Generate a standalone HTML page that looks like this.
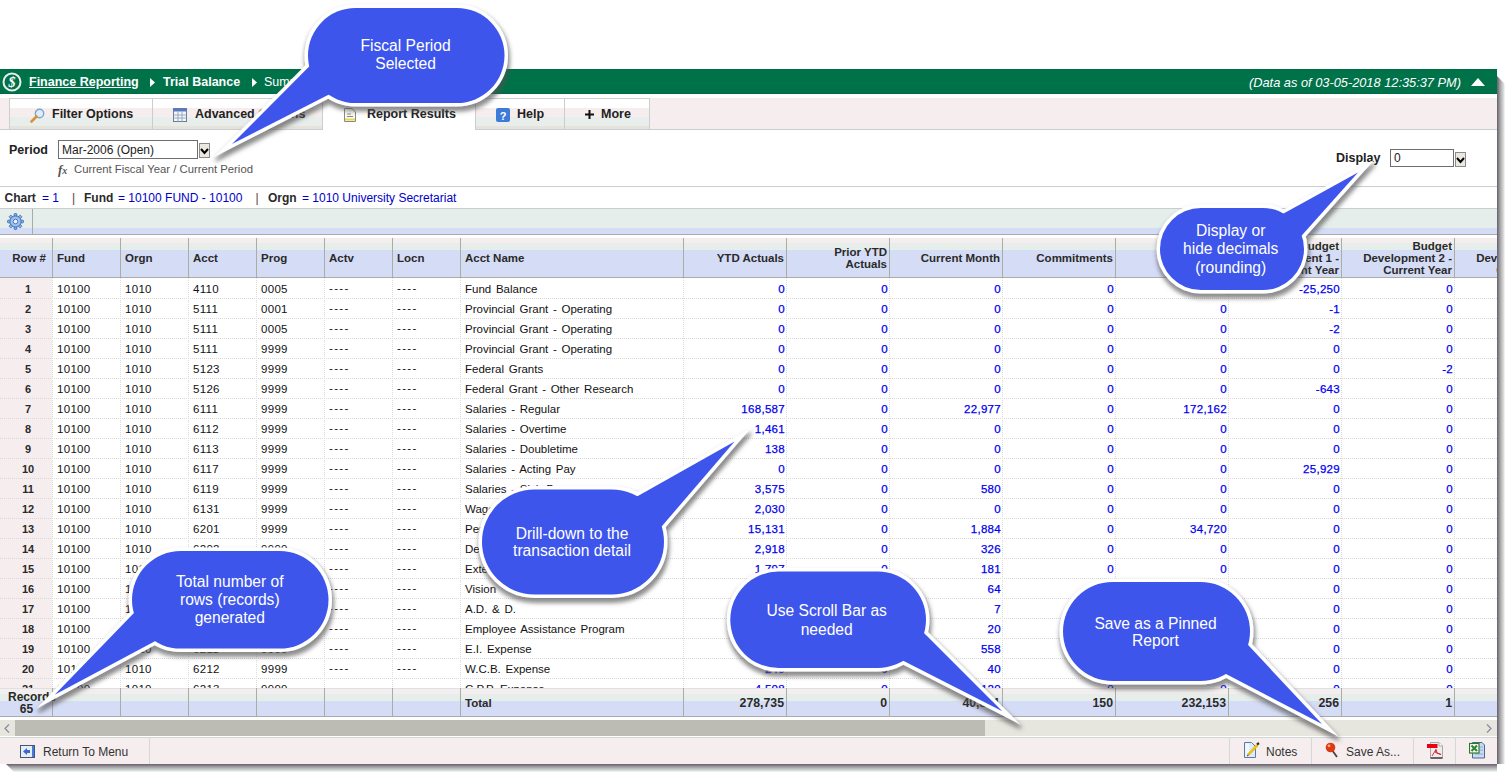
<!DOCTYPE html>
<html><head><meta charset="utf-8"><title>Trial Balance</title>
<style>
*{box-sizing:border-box;}
html,body{margin:0;padding:0;}
body{width:1512px;height:779px;overflow:hidden;background:#fff;position:relative;font-family:"Liberation Sans", sans-serif;color:#222;}
.abs{position:absolute;}
#win{position:absolute;left:0;top:69px;width:1497px;height:695px;background:#fff;overflow:hidden;}
#green{position:absolute;left:0;top:0;width:1497px;height:25px;background:#00724A;border-top:1px solid #006A44;border-bottom:1px solid #006A44;}
.bc{position:absolute;top:5px;font-size:12.5px;font-weight:bold;color:#fff;white-space:nowrap;}
#tabbar{position:absolute;left:0;top:29px;width:1497px;height:32px;background:#F6EEEE;border-bottom:1px solid #C9CFCF;}
.tab{position:absolute;top:0;height:31px;border:1px solid #C9CFCF;border-bottom:none;background:linear-gradient(#fff 0,#fff 9px,#F6EEEE 9px,#F6EEEE 18px,#E8EEEC 18px,#E8EEEC 27px,#E6E4DA 27px);font-size:12.5px;font-weight:bold;color:#222;white-space:nowrap;}
.tab.act{background:#fff;height:32px;}
.tab span{position:absolute;top:8px;}
.hl{position:absolute;left:0;width:1497px;height:1px;background:#C9CFCF;}
.cell{position:absolute;white-space:nowrap;font-size:12px;}
.dt{font-size:11.5px;color:#111;word-spacing:1.5px;}
.num{letter-spacing:0.3px;-webkit-text-stroke:0.25px #0000F0;}
.num{color:#0000F0;text-align:right;}
.hdr{position:absolute;font-size:11.5px;font-weight:bold;color:#2a2a2a;line-height:12px;white-space:nowrap;}
.callout{position:absolute;left:0;top:0;}
.ct{position:absolute;color:#fff;font-size:16px;line-height:18px;text-align:center;white-space:nowrap;}
</style></head><body>
<div style="position:absolute;left:1497px;top:76px;width:8px;height:696px;background:linear-gradient(90deg,#6E6C70 0px,#6E6C70 1px,#857D8D 1px,#857D8D 2px,#9498A0 2px,#9498A0 3px,#B2A6A6 3px,#B2A6A6 4px,#BABEB6 4px,#BABEB6 5px,#C6CCCC 5px,#C6CCCC 6px,#D8DCDC 6px,#D8DCDC 7px,#ECF2F2 7px,#ECF2F2 8px);clip-path:polygon(0 0,100% 8px,100% 688px,0 688px);"></div>
<div style="position:absolute;left:6px;top:764px;width:1491px;height:8px;background:linear-gradient(180deg,#6E6C70 0px,#6E6C70 1px,#857D8D 1px,#857D8D 2px,#9498A0 2px,#9498A0 3px,#B2A6A6 3px,#B2A6A6 4px,#BABEB6 4px,#BABEB6 5px,#C6CCCC 5px,#C6CCCC 6px,#D8DCDC 6px,#D8DCDC 7px,#ECF2F2 7px,#ECF2F2 8px);clip-path:polygon(0 0,100% 0,100% 100%,8px 100%);"></div>
<div id="win">

<div id="green">
<svg class="abs" style="left:2px;top:2px" width="20" height="20" viewBox="0 0 20 20"><circle cx="10" cy="10" r="8.5" fill="none" stroke="#E8F0EC" stroke-width="2"/><text x="10" y="15" font-family="Liberation Serif" font-size="14" font-weight="bold" font-style="italic" fill="#fff" text-anchor="middle">$</text></svg>
<div class="bc" style="left:29px;text-decoration:underline;">Finance Reporting</div>
<svg class="abs" style="left:150px;top:7.5px" width="5" height="9"><path d="M0 0 L5 4.5 L0 9Z" fill="#fff"/></svg>
<div class="bc" style="left:163px;">Trial Balance</div>
<svg class="abs" style="left:252px;top:7.5px" width="5" height="9"><path d="M0 0 L5 4.5 L0 9Z" fill="#fff"/></svg>
<div class="bc" style="left:264px;font-weight:normal;">Summary</div>
<div class="bc" style="left:1249px;font-weight:normal;font-style:italic;font-size:12.8px;">(Data as of 03-05-2018 12:35:37 PM)</div>
<svg class="abs" style="left:1471px;top:8px" width="14" height="8"><path d="M0 8 L7 0 L14 8Z" fill="#fff"/></svg>
</div>
<div id="tabbar">
<div class="tab" style="left:9px;width:144px;"><svg class="abs" style="left:20px;top:9px" width="15" height="15" viewBox="0 0 15 15"><circle cx="9.5" cy="5.5" r="4.2" fill="#DDEEFA" stroke="#7EA6C8" stroke-width="1.4"/><path d="M6.5 8.5 L1.5 13.5" stroke="#D8923A" stroke-width="2.6" stroke-linecap="round"/></svg><span style="left:42px">Filter Options</span></div>
<div class="tab" style="left:152px;width:171px;"><svg class="abs" style="left:20px;top:9px" width="14" height="14" viewBox="0 0 14 14"><rect x="0.5" y="0.5" width="13" height="13" fill="#F4F6FA" stroke="#6A7C9C"/><rect x="0.5" y="0.5" width="13" height="3" fill="#5A7AC0"/><path d="M0.5 7H13.5M0.5 10H13.5M5 3.5V13.5M9 3.5V13.5" stroke="#9AA8C0" stroke-width="1"/></svg><span style="left:42px">Advanced Options</span></div>
<div class="tab act" style="left:322px;width:154px;"><svg class="abs" style="left:21px;top:9px" width="12" height="14" viewBox="0 0 12 14"><path d="M0.5 0.5H8L11.5 4V13.5H0.5Z" fill="#FAFAF4" stroke="#8A8A80"/><path d="M3 6H7M3 8.5H9" stroke="#888" stroke-width="1"/><path d="M1 11.5H11" stroke="#E8D84A" stroke-width="2"/></svg><span style="left:44px">Report Results</span></div>
<div class="tab" style="left:475px;width:91px;"><svg class="abs" style="left:20px;top:9px" width="14" height="14" viewBox="0 0 14 14"><rect x="0" y="0" width="14" height="14" rx="2" fill="#3E7AD8"/><text x="7" y="11.5" font-family="Liberation Sans" font-size="11" font-weight="bold" fill="#fff" text-anchor="middle">?</text></svg><span style="left:41px">Help</span></div>
<div class="tab" style="left:564px;width:86px;"><svg class="abs" style="left:20px;top:11px" width="9" height="9" viewBox="0 0 9 9"><path d="M4.5 0V9M0 4.5H9" stroke="#111" stroke-width="2"/></svg><span style="left:36px">More</span></div>
</div>
<div class="cell" style="left:9px;top:74px;font-weight:bold;font-size:12.5px;">Period</div>
<div class="abs" style="left:58px;top:71px;width:140px;height:19px;border:1px solid #6E6E6E;background:#fff;"><span class="cell" style="left:3px;top:2px;">Mar-2006 (Open)</span></div>
<div class="abs" style="left:199px;top:74px;width:11px;height:15px;border:1px solid #8A8A8A;background:#EAE8E0;"><svg class="abs" style="left:0px;top:3px" width="9" height="8"><path d="M1 2 L4.5 6 L8 2" fill="none" stroke="#000" stroke-width="2"/></svg></div>
<div class="cell" style="left:58px;top:93px;font-size:13px;font-style:italic;font-family:'Liberation Serif';font-weight:bold;color:#555;">f<span style="font-size:10px">x</span></div>
<div class="cell" style="left:74px;top:94px;font-size:11.3px;color:#555;">Current Fiscal Year / Current Period</div>
<div class="cell" style="left:1336px;top:82px;font-weight:bold;font-size:12.5px;">Display</div>
<div class="abs" style="left:1390px;top:80px;width:64px;height:18px;border:1px solid #6E6E6E;background:#fff;"><span class="cell" style="left:3px;top:1px;">0</span></div>
<div class="abs" style="left:1455px;top:83px;width:11px;height:15px;border:1px solid #8A8A8A;background:#EAE8E0;"><svg class="abs" style="left:0px;top:3px" width="9" height="8"><path d="M1 2 L4.5 6 L8 2" fill="none" stroke="#000" stroke-width="2"/></svg></div>
<div class="hl" style="top:117px;"></div>
<div class="cell" style="left:4.5px;top:122px;font-size:12px;font-weight:bold;color:#2a2a2a;">Chart</div>
<div class="cell" style="left:42px;top:122px;font-size:12px;color:#0000C8;">= 1</div>
<div class="cell" style="left:72px;top:122px;font-size:12px;color:#5a3a3a;">|</div>
<div class="cell" style="left:84px;top:122px;font-size:12px;font-weight:bold;color:#2a2a2a;">Fund</div>
<div class="cell" style="left:118px;top:122px;font-size:12px;color:#0000C8;">= 10100 FUND - 10100</div>
<div class="cell" style="left:255.5px;top:122px;font-size:12px;color:#5a3a3a;">|</div>
<div class="cell" style="left:268px;top:122px;font-size:12px;font-weight:bold;color:#2a2a2a;">Orgn</div>
<div class="cell" style="left:302px;top:122px;font-size:12px;color:#0000C8;">= 1010 University Secretariat</div>
<div class="hl" style="top:139px;"></div>
<div class="abs" style="left:0;top:140px;width:1497px;height:19px;background:#E6EEEC;"></div>
<div class="abs" style="left:0;top:159px;width:1497px;height:6px;background:#D5DCF5;"></div>
<div class="abs" style="left:0;top:165px;width:1497px;height:1px;background:#A8ACA8;"></div>
<div class="abs" style="left:32px;top:140px;width:1px;height:25px;background:#A8ACA8;"></div>
<svg class="abs" style="left:7px;top:144px" width="17" height="17" viewBox="0 0 17 17"><g fill="#8DB4E8" stroke="#3E6EB8" stroke-width="0.9"><rect x="7.2" y="0.6" width="2.6" height="4" rx="0.6" transform="rotate(0 8.5 8.5)"/><rect x="7.2" y="0.6" width="2.6" height="4" rx="0.6" transform="rotate(45 8.5 8.5)"/><rect x="7.2" y="0.6" width="2.6" height="4" rx="0.6" transform="rotate(90 8.5 8.5)"/><rect x="7.2" y="0.6" width="2.6" height="4" rx="0.6" transform="rotate(135 8.5 8.5)"/><rect x="7.2" y="0.6" width="2.6" height="4" rx="0.6" transform="rotate(180 8.5 8.5)"/><rect x="7.2" y="0.6" width="2.6" height="4" rx="0.6" transform="rotate(225 8.5 8.5)"/><rect x="7.2" y="0.6" width="2.6" height="4" rx="0.6" transform="rotate(270 8.5 8.5)"/><rect x="7.2" y="0.6" width="2.6" height="4" rx="0.6" transform="rotate(315 8.5 8.5)"/><circle cx="8.5" cy="8.5" r="5.6"/></g><circle cx="8.5" cy="8.5" r="4.6" fill="#9CC2F0"/><circle cx="8.5" cy="8.5" r="2.3" fill="#EEF4FA" stroke="#3E6EB8" stroke-width="0.9"/></svg>
<div class="abs" style="left:0;top:169px;width:1497px;height:5px;background:#F6EEEE;"></div>
<div class="abs" style="left:0;top:174px;width:1497px;height:7px;background:#E6EEEC;"></div>
<div class="abs" style="left:0;top:181px;width:1497px;height:27px;background:#D5DCF5;"></div>
<div class="abs" style="left:0;top:208px;width:1497px;height:1px;background:#A9ADA6;"></div>
<div class="abs" style="left:52px;top:169px;width:1px;height:39px;background:#A9ADA6;"></div>
<div class="abs" style="left:120px;top:169px;width:1px;height:39px;background:#A9ADA6;"></div>
<div class="abs" style="left:188px;top:169px;width:1px;height:39px;background:#A9ADA6;"></div>
<div class="abs" style="left:256px;top:169px;width:1px;height:39px;background:#A9ADA6;"></div>
<div class="abs" style="left:324px;top:169px;width:1px;height:39px;background:#A9ADA6;"></div>
<div class="abs" style="left:392px;top:169px;width:1px;height:39px;background:#A9ADA6;"></div>
<div class="abs" style="left:460px;top:169px;width:1px;height:39px;background:#A9ADA6;"></div>
<div class="abs" style="left:683px;top:169px;width:1px;height:39px;background:#A9ADA6;"></div>
<div class="abs" style="left:786px;top:169px;width:1px;height:39px;background:#A9ADA6;"></div>
<div class="abs" style="left:889px;top:169px;width:1px;height:39px;background:#A9ADA6;"></div>
<div class="abs" style="left:1002px;top:169px;width:1px;height:39px;background:#A9ADA6;"></div>
<div class="abs" style="left:1115px;top:169px;width:1px;height:39px;background:#A9ADA6;"></div>
<div class="abs" style="left:1228px;top:169px;width:1px;height:39px;background:#A9ADA6;"></div>
<div class="abs" style="left:1341px;top:169px;width:1px;height:39px;background:#A9ADA6;"></div>
<div class="abs" style="left:1454px;top:169px;width:1px;height:39px;background:#A9ADA6;"></div>
<div class="hdr" style="left:0px;width:46px;text-align:right;top:183px;">Row #</div>
<div class="hdr" style="left:57px;top:183px;">Fund</div>
<div class="hdr" style="left:125px;top:183px;">Orgn</div>
<div class="hdr" style="left:193px;top:183px;">Acct</div>
<div class="hdr" style="left:261px;top:183px;">Prog</div>
<div class="hdr" style="left:329px;top:183px;">Actv</div>
<div class="hdr" style="left:397px;top:183px;">Locn</div>
<div class="hdr" style="left:465px;top:183px;">Acct Name</div>
<div class="hdr" style="left:683px;width:101px;text-align:right;top:183px;">YTD Actuals</div>
<div class="hdr" style="left:786px;width:101px;text-align:right;top:177px;">Prior YTD<br>Actuals</div>
<div class="hdr" style="left:889px;width:111px;text-align:right;top:183px;">Current Month</div>
<div class="hdr" style="left:1002px;width:111px;text-align:right;top:183px;">Commitments</div>
<div class="hdr" style="left:1115px;width:111px;text-align:right;top:177px;">Adjusted<br>Budget</div>
<div class="hdr" style="left:1228px;width:111px;text-align:right;top:171px;">Budget<br>Development 1 -<br>Current Year</div>
<div class="hdr" style="left:1341px;width:111px;text-align:right;top:171px;">Budget<br>Development 2 -<br>Current Year</div>
<div class="hdr" style="left:1454px;width:111px;text-align:right;top:171px;">Budget<br>Development 3 -<br>Current Year</div>
<div class="abs" style="left:0;top:209px;width:1497px;height:410px;overflow:hidden;">
<div class="abs" style="left:0;top:0;width:52px;height:420px;background:#F6EEEE;"></div>
<div class="abs" style="left:0;top:20px;width:1497px;height:1px;background-image:linear-gradient(90deg,#D8D8D8 50%,transparent 50%);background-size:2px 1px;"></div>
<div class="cell" style="left:2px;width:52px;text-align:center;top:5px;font-weight:bold;font-size:11px;color:#2a2a2a;">1</div>
<div class="cell dt" style="left:57px;top:5px;letter-spacing:0.3px;">10100</div>
<div class="cell dt" style="left:125px;top:5px;letter-spacing:0.3px;">1010</div>
<div class="cell dt" style="left:193px;top:5px;letter-spacing:0.3px;">4110</div>
<div class="cell dt" style="left:261px;top:5px;letter-spacing:0.3px;">0005</div>
<div class="cell dt" style="left:329px;top:4px;letter-spacing:1.3px;">----</div>
<div class="cell dt" style="left:397px;top:4px;letter-spacing:1.3px;">----</div>
<div class="cell dt" style="left:465px;top:5px;">Fund Balance</div>
<div class="cell dt num" style="left:683px;width:102px;top:5px;color:#0000F0;">0</div>
<div class="cell dt num" style="left:786px;width:102px;top:5px;color:#0000F0;">0</div>
<div class="cell dt num" style="left:889px;width:112px;top:5px;color:#0000F0;">0</div>
<div class="cell dt num" style="left:1002px;width:112px;top:5px;color:#0000F0;">0</div>
<div class="cell dt num" style="left:1115px;width:112px;top:5px;color:#0000F0;">0</div>
<div class="cell dt num" style="left:1228px;width:112px;top:5px;color:#0000F0;">-25,250</div>
<div class="cell dt num" style="left:1341px;width:112px;top:5px;color:#0000F0;">0</div>
<div class="abs" style="left:0;top:40px;width:1497px;height:1px;background-image:linear-gradient(90deg,#D8D8D8 50%,transparent 50%);background-size:2px 1px;"></div>
<div class="cell" style="left:2px;width:52px;text-align:center;top:25px;font-weight:bold;font-size:11px;color:#2a2a2a;">2</div>
<div class="cell dt" style="left:57px;top:25px;letter-spacing:0.3px;">10100</div>
<div class="cell dt" style="left:125px;top:25px;letter-spacing:0.3px;">1010</div>
<div class="cell dt" style="left:193px;top:25px;letter-spacing:0.3px;">5111</div>
<div class="cell dt" style="left:261px;top:25px;letter-spacing:0.3px;">0001</div>
<div class="cell dt" style="left:329px;top:24px;letter-spacing:1.3px;">----</div>
<div class="cell dt" style="left:397px;top:24px;letter-spacing:1.3px;">----</div>
<div class="cell dt" style="left:465px;top:25px;">Provincial Grant - Operating</div>
<div class="cell dt num" style="left:683px;width:102px;top:25px;color:#0000F0;">0</div>
<div class="cell dt num" style="left:786px;width:102px;top:25px;color:#0000F0;">0</div>
<div class="cell dt num" style="left:889px;width:112px;top:25px;color:#0000F0;">0</div>
<div class="cell dt num" style="left:1002px;width:112px;top:25px;color:#0000F0;">0</div>
<div class="cell dt num" style="left:1115px;width:112px;top:25px;color:#0000F0;">0</div>
<div class="cell dt num" style="left:1228px;width:112px;top:25px;color:#0000F0;">-1</div>
<div class="cell dt num" style="left:1341px;width:112px;top:25px;color:#0000F0;">0</div>
<div class="abs" style="left:0;top:60px;width:1497px;height:1px;background-image:linear-gradient(90deg,#D8D8D8 50%,transparent 50%);background-size:2px 1px;"></div>
<div class="cell" style="left:2px;width:52px;text-align:center;top:45px;font-weight:bold;font-size:11px;color:#2a2a2a;">3</div>
<div class="cell dt" style="left:57px;top:45px;letter-spacing:0.3px;">10100</div>
<div class="cell dt" style="left:125px;top:45px;letter-spacing:0.3px;">1010</div>
<div class="cell dt" style="left:193px;top:45px;letter-spacing:0.3px;">5111</div>
<div class="cell dt" style="left:261px;top:45px;letter-spacing:0.3px;">0005</div>
<div class="cell dt" style="left:329px;top:44px;letter-spacing:1.3px;">----</div>
<div class="cell dt" style="left:397px;top:44px;letter-spacing:1.3px;">----</div>
<div class="cell dt" style="left:465px;top:45px;">Provincial Grant - Operating</div>
<div class="cell dt num" style="left:683px;width:102px;top:45px;color:#0000F0;">0</div>
<div class="cell dt num" style="left:786px;width:102px;top:45px;color:#0000F0;">0</div>
<div class="cell dt num" style="left:889px;width:112px;top:45px;color:#0000F0;">0</div>
<div class="cell dt num" style="left:1002px;width:112px;top:45px;color:#0000F0;">0</div>
<div class="cell dt num" style="left:1115px;width:112px;top:45px;color:#0000F0;">0</div>
<div class="cell dt num" style="left:1228px;width:112px;top:45px;color:#0000F0;">-2</div>
<div class="cell dt num" style="left:1341px;width:112px;top:45px;color:#0000F0;">0</div>
<div class="abs" style="left:0;top:80px;width:1497px;height:1px;background-image:linear-gradient(90deg,#D8D8D8 50%,transparent 50%);background-size:2px 1px;"></div>
<div class="cell" style="left:2px;width:52px;text-align:center;top:65px;font-weight:bold;font-size:11px;color:#2a2a2a;">4</div>
<div class="cell dt" style="left:57px;top:65px;letter-spacing:0.3px;">10100</div>
<div class="cell dt" style="left:125px;top:65px;letter-spacing:0.3px;">1010</div>
<div class="cell dt" style="left:193px;top:65px;letter-spacing:0.3px;">5111</div>
<div class="cell dt" style="left:261px;top:65px;letter-spacing:0.3px;">9999</div>
<div class="cell dt" style="left:329px;top:64px;letter-spacing:1.3px;">----</div>
<div class="cell dt" style="left:397px;top:64px;letter-spacing:1.3px;">----</div>
<div class="cell dt" style="left:465px;top:65px;">Provincial Grant - Operating</div>
<div class="cell dt num" style="left:683px;width:102px;top:65px;color:#0000F0;">0</div>
<div class="cell dt num" style="left:786px;width:102px;top:65px;color:#0000F0;">0</div>
<div class="cell dt num" style="left:889px;width:112px;top:65px;color:#0000F0;">0</div>
<div class="cell dt num" style="left:1002px;width:112px;top:65px;color:#0000F0;">0</div>
<div class="cell dt num" style="left:1115px;width:112px;top:65px;color:#0000F0;">0</div>
<div class="cell dt num" style="left:1228px;width:112px;top:65px;color:#0000F0;">0</div>
<div class="cell dt num" style="left:1341px;width:112px;top:65px;color:#0000F0;">0</div>
<div class="abs" style="left:0;top:100px;width:1497px;height:1px;background-image:linear-gradient(90deg,#D8D8D8 50%,transparent 50%);background-size:2px 1px;"></div>
<div class="cell" style="left:2px;width:52px;text-align:center;top:85px;font-weight:bold;font-size:11px;color:#2a2a2a;">5</div>
<div class="cell dt" style="left:57px;top:85px;letter-spacing:0.3px;">10100</div>
<div class="cell dt" style="left:125px;top:85px;letter-spacing:0.3px;">1010</div>
<div class="cell dt" style="left:193px;top:85px;letter-spacing:0.3px;">5123</div>
<div class="cell dt" style="left:261px;top:85px;letter-spacing:0.3px;">9999</div>
<div class="cell dt" style="left:329px;top:84px;letter-spacing:1.3px;">----</div>
<div class="cell dt" style="left:397px;top:84px;letter-spacing:1.3px;">----</div>
<div class="cell dt" style="left:465px;top:85px;">Federal Grants</div>
<div class="cell dt num" style="left:683px;width:102px;top:85px;color:#0000F0;">0</div>
<div class="cell dt num" style="left:786px;width:102px;top:85px;color:#0000F0;">0</div>
<div class="cell dt num" style="left:889px;width:112px;top:85px;color:#0000F0;">0</div>
<div class="cell dt num" style="left:1002px;width:112px;top:85px;color:#0000F0;">0</div>
<div class="cell dt num" style="left:1115px;width:112px;top:85px;color:#0000F0;">0</div>
<div class="cell dt num" style="left:1228px;width:112px;top:85px;color:#0000F0;">0</div>
<div class="cell dt num" style="left:1341px;width:112px;top:85px;color:#0000F0;">-2</div>
<div class="abs" style="left:0;top:120px;width:1497px;height:1px;background-image:linear-gradient(90deg,#D8D8D8 50%,transparent 50%);background-size:2px 1px;"></div>
<div class="cell" style="left:2px;width:52px;text-align:center;top:105px;font-weight:bold;font-size:11px;color:#2a2a2a;">6</div>
<div class="cell dt" style="left:57px;top:105px;letter-spacing:0.3px;">10100</div>
<div class="cell dt" style="left:125px;top:105px;letter-spacing:0.3px;">1010</div>
<div class="cell dt" style="left:193px;top:105px;letter-spacing:0.3px;">5126</div>
<div class="cell dt" style="left:261px;top:105px;letter-spacing:0.3px;">9999</div>
<div class="cell dt" style="left:329px;top:104px;letter-spacing:1.3px;">----</div>
<div class="cell dt" style="left:397px;top:104px;letter-spacing:1.3px;">----</div>
<div class="cell dt" style="left:465px;top:105px;">Federal Grant - Other Research</div>
<div class="cell dt num" style="left:683px;width:102px;top:105px;color:#0000F0;">0</div>
<div class="cell dt num" style="left:786px;width:102px;top:105px;color:#0000F0;">0</div>
<div class="cell dt num" style="left:889px;width:112px;top:105px;color:#0000F0;">0</div>
<div class="cell dt num" style="left:1002px;width:112px;top:105px;color:#0000F0;">0</div>
<div class="cell dt num" style="left:1115px;width:112px;top:105px;color:#0000F0;">0</div>
<div class="cell dt num" style="left:1228px;width:112px;top:105px;color:#0000F0;">-643</div>
<div class="cell dt num" style="left:1341px;width:112px;top:105px;color:#0000F0;">0</div>
<div class="abs" style="left:0;top:140px;width:1497px;height:1px;background-image:linear-gradient(90deg,#D8D8D8 50%,transparent 50%);background-size:2px 1px;"></div>
<div class="cell" style="left:2px;width:52px;text-align:center;top:125px;font-weight:bold;font-size:11px;color:#2a2a2a;">7</div>
<div class="cell dt" style="left:57px;top:125px;letter-spacing:0.3px;">10100</div>
<div class="cell dt" style="left:125px;top:125px;letter-spacing:0.3px;">1010</div>
<div class="cell dt" style="left:193px;top:125px;letter-spacing:0.3px;">6111</div>
<div class="cell dt" style="left:261px;top:125px;letter-spacing:0.3px;">9999</div>
<div class="cell dt" style="left:329px;top:124px;letter-spacing:1.3px;">----</div>
<div class="cell dt" style="left:397px;top:124px;letter-spacing:1.3px;">----</div>
<div class="cell dt" style="left:465px;top:125px;">Salaries - Regular</div>
<div class="cell dt num" style="left:683px;width:102px;top:125px;color:#0000F0;">168,587</div>
<div class="cell dt num" style="left:786px;width:102px;top:125px;color:#0000F0;">0</div>
<div class="cell dt num" style="left:889px;width:112px;top:125px;color:#0000F0;">22,977</div>
<div class="cell dt num" style="left:1002px;width:112px;top:125px;color:#0000F0;">0</div>
<div class="cell dt num" style="left:1115px;width:112px;top:125px;color:#0000F0;">172,162</div>
<div class="cell dt num" style="left:1228px;width:112px;top:125px;color:#0000F0;">0</div>
<div class="cell dt num" style="left:1341px;width:112px;top:125px;color:#0000F0;">0</div>
<div class="abs" style="left:0;top:160px;width:1497px;height:1px;background-image:linear-gradient(90deg,#D8D8D8 50%,transparent 50%);background-size:2px 1px;"></div>
<div class="cell" style="left:2px;width:52px;text-align:center;top:145px;font-weight:bold;font-size:11px;color:#2a2a2a;">8</div>
<div class="cell dt" style="left:57px;top:145px;letter-spacing:0.3px;">10100</div>
<div class="cell dt" style="left:125px;top:145px;letter-spacing:0.3px;">1010</div>
<div class="cell dt" style="left:193px;top:145px;letter-spacing:0.3px;">6112</div>
<div class="cell dt" style="left:261px;top:145px;letter-spacing:0.3px;">9999</div>
<div class="cell dt" style="left:329px;top:144px;letter-spacing:1.3px;">----</div>
<div class="cell dt" style="left:397px;top:144px;letter-spacing:1.3px;">----</div>
<div class="cell dt" style="left:465px;top:145px;">Salaries - Overtime</div>
<div class="cell dt num" style="left:683px;width:102px;top:145px;color:#0000F0;">1,461</div>
<div class="cell dt num" style="left:786px;width:102px;top:145px;color:#0000F0;">0</div>
<div class="cell dt num" style="left:889px;width:112px;top:145px;color:#0000F0;">0</div>
<div class="cell dt num" style="left:1002px;width:112px;top:145px;color:#0000F0;">0</div>
<div class="cell dt num" style="left:1115px;width:112px;top:145px;color:#0000F0;">0</div>
<div class="cell dt num" style="left:1228px;width:112px;top:145px;color:#0000F0;">0</div>
<div class="cell dt num" style="left:1341px;width:112px;top:145px;color:#0000F0;">0</div>
<div class="abs" style="left:0;top:180px;width:1497px;height:1px;background-image:linear-gradient(90deg,#D8D8D8 50%,transparent 50%);background-size:2px 1px;"></div>
<div class="cell" style="left:2px;width:52px;text-align:center;top:165px;font-weight:bold;font-size:11px;color:#2a2a2a;">9</div>
<div class="cell dt" style="left:57px;top:165px;letter-spacing:0.3px;">10100</div>
<div class="cell dt" style="left:125px;top:165px;letter-spacing:0.3px;">1010</div>
<div class="cell dt" style="left:193px;top:165px;letter-spacing:0.3px;">6113</div>
<div class="cell dt" style="left:261px;top:165px;letter-spacing:0.3px;">9999</div>
<div class="cell dt" style="left:329px;top:164px;letter-spacing:1.3px;">----</div>
<div class="cell dt" style="left:397px;top:164px;letter-spacing:1.3px;">----</div>
<div class="cell dt" style="left:465px;top:165px;">Salaries - Doubletime</div>
<div class="cell dt num" style="left:683px;width:102px;top:165px;color:#0000F0;">138</div>
<div class="cell dt num" style="left:786px;width:102px;top:165px;color:#0000F0;">0</div>
<div class="cell dt num" style="left:889px;width:112px;top:165px;color:#0000F0;">0</div>
<div class="cell dt num" style="left:1002px;width:112px;top:165px;color:#0000F0;">0</div>
<div class="cell dt num" style="left:1115px;width:112px;top:165px;color:#0000F0;">0</div>
<div class="cell dt num" style="left:1228px;width:112px;top:165px;color:#0000F0;">0</div>
<div class="cell dt num" style="left:1341px;width:112px;top:165px;color:#0000F0;">0</div>
<div class="abs" style="left:0;top:200px;width:1497px;height:1px;background-image:linear-gradient(90deg,#D8D8D8 50%,transparent 50%);background-size:2px 1px;"></div>
<div class="cell" style="left:2px;width:52px;text-align:center;top:185px;font-weight:bold;font-size:11px;color:#2a2a2a;">10</div>
<div class="cell dt" style="left:57px;top:185px;letter-spacing:0.3px;">10100</div>
<div class="cell dt" style="left:125px;top:185px;letter-spacing:0.3px;">1010</div>
<div class="cell dt" style="left:193px;top:185px;letter-spacing:0.3px;">6117</div>
<div class="cell dt" style="left:261px;top:185px;letter-spacing:0.3px;">9999</div>
<div class="cell dt" style="left:329px;top:184px;letter-spacing:1.3px;">----</div>
<div class="cell dt" style="left:397px;top:184px;letter-spacing:1.3px;">----</div>
<div class="cell dt" style="left:465px;top:185px;">Salaries - Acting Pay</div>
<div class="cell dt num" style="left:683px;width:102px;top:185px;color:#0000F0;">0</div>
<div class="cell dt num" style="left:786px;width:102px;top:185px;color:#0000F0;">0</div>
<div class="cell dt num" style="left:889px;width:112px;top:185px;color:#0000F0;">0</div>
<div class="cell dt num" style="left:1002px;width:112px;top:185px;color:#0000F0;">0</div>
<div class="cell dt num" style="left:1115px;width:112px;top:185px;color:#0000F0;">0</div>
<div class="cell dt num" style="left:1228px;width:112px;top:185px;color:#0000F0;">25,929</div>
<div class="cell dt num" style="left:1341px;width:112px;top:185px;color:#0000F0;">0</div>
<div class="abs" style="left:0;top:220px;width:1497px;height:1px;background-image:linear-gradient(90deg,#D8D8D8 50%,transparent 50%);background-size:2px 1px;"></div>
<div class="cell" style="left:2px;width:52px;text-align:center;top:205px;font-weight:bold;font-size:11px;color:#2a2a2a;">11</div>
<div class="cell dt" style="left:57px;top:205px;letter-spacing:0.3px;">10100</div>
<div class="cell dt" style="left:125px;top:205px;letter-spacing:0.3px;">1010</div>
<div class="cell dt" style="left:193px;top:205px;letter-spacing:0.3px;">6119</div>
<div class="cell dt" style="left:261px;top:205px;letter-spacing:0.3px;">9999</div>
<div class="cell dt" style="left:329px;top:204px;letter-spacing:1.3px;">----</div>
<div class="cell dt" style="left:397px;top:204px;letter-spacing:1.3px;">----</div>
<div class="cell dt" style="left:465px;top:205px;">Salaries - Sick Pay</div>
<div class="cell dt num" style="left:683px;width:102px;top:205px;color:#0000F0;">3,575</div>
<div class="cell dt num" style="left:786px;width:102px;top:205px;color:#0000F0;">0</div>
<div class="cell dt num" style="left:889px;width:112px;top:205px;color:#0000F0;">580</div>
<div class="cell dt num" style="left:1002px;width:112px;top:205px;color:#0000F0;">0</div>
<div class="cell dt num" style="left:1115px;width:112px;top:205px;color:#0000F0;">0</div>
<div class="cell dt num" style="left:1228px;width:112px;top:205px;color:#0000F0;">0</div>
<div class="cell dt num" style="left:1341px;width:112px;top:205px;color:#0000F0;">0</div>
<div class="abs" style="left:0;top:240px;width:1497px;height:1px;background-image:linear-gradient(90deg,#D8D8D8 50%,transparent 50%);background-size:2px 1px;"></div>
<div class="cell" style="left:2px;width:52px;text-align:center;top:225px;font-weight:bold;font-size:11px;color:#2a2a2a;">12</div>
<div class="cell dt" style="left:57px;top:225px;letter-spacing:0.3px;">10100</div>
<div class="cell dt" style="left:125px;top:225px;letter-spacing:0.3px;">1010</div>
<div class="cell dt" style="left:193px;top:225px;letter-spacing:0.3px;">6131</div>
<div class="cell dt" style="left:261px;top:225px;letter-spacing:0.3px;">9999</div>
<div class="cell dt" style="left:329px;top:224px;letter-spacing:1.3px;">----</div>
<div class="cell dt" style="left:397px;top:224px;letter-spacing:1.3px;">----</div>
<div class="cell dt" style="left:465px;top:225px;">Wages - Casual</div>
<div class="cell dt num" style="left:683px;width:102px;top:225px;color:#0000F0;">2,030</div>
<div class="cell dt num" style="left:786px;width:102px;top:225px;color:#0000F0;">0</div>
<div class="cell dt num" style="left:889px;width:112px;top:225px;color:#0000F0;">0</div>
<div class="cell dt num" style="left:1002px;width:112px;top:225px;color:#0000F0;">0</div>
<div class="cell dt num" style="left:1115px;width:112px;top:225px;color:#0000F0;">0</div>
<div class="cell dt num" style="left:1228px;width:112px;top:225px;color:#0000F0;">0</div>
<div class="cell dt num" style="left:1341px;width:112px;top:225px;color:#0000F0;">0</div>
<div class="abs" style="left:0;top:260px;width:1497px;height:1px;background-image:linear-gradient(90deg,#D8D8D8 50%,transparent 50%);background-size:2px 1px;"></div>
<div class="cell" style="left:2px;width:52px;text-align:center;top:245px;font-weight:bold;font-size:11px;color:#2a2a2a;">13</div>
<div class="cell dt" style="left:57px;top:245px;letter-spacing:0.3px;">10100</div>
<div class="cell dt" style="left:125px;top:245px;letter-spacing:0.3px;">1010</div>
<div class="cell dt" style="left:193px;top:245px;letter-spacing:0.3px;">6201</div>
<div class="cell dt" style="left:261px;top:245px;letter-spacing:0.3px;">9999</div>
<div class="cell dt" style="left:329px;top:244px;letter-spacing:1.3px;">----</div>
<div class="cell dt" style="left:397px;top:244px;letter-spacing:1.3px;">----</div>
<div class="cell dt" style="left:465px;top:245px;">Pension Expense</div>
<div class="cell dt num" style="left:683px;width:102px;top:245px;color:#0000F0;">15,131</div>
<div class="cell dt num" style="left:786px;width:102px;top:245px;color:#0000F0;">0</div>
<div class="cell dt num" style="left:889px;width:112px;top:245px;color:#0000F0;">1,884</div>
<div class="cell dt num" style="left:1002px;width:112px;top:245px;color:#0000F0;">0</div>
<div class="cell dt num" style="left:1115px;width:112px;top:245px;color:#0000F0;">34,720</div>
<div class="cell dt num" style="left:1228px;width:112px;top:245px;color:#0000F0;">0</div>
<div class="cell dt num" style="left:1341px;width:112px;top:245px;color:#0000F0;">0</div>
<div class="abs" style="left:0;top:280px;width:1497px;height:1px;background-image:linear-gradient(90deg,#D8D8D8 50%,transparent 50%);background-size:2px 1px;"></div>
<div class="cell" style="left:2px;width:52px;text-align:center;top:265px;font-weight:bold;font-size:11px;color:#2a2a2a;">14</div>
<div class="cell dt" style="left:57px;top:265px;letter-spacing:0.3px;">10100</div>
<div class="cell dt" style="left:125px;top:265px;letter-spacing:0.3px;">1010</div>
<div class="cell dt" style="left:193px;top:265px;letter-spacing:0.3px;">6202</div>
<div class="cell dt" style="left:261px;top:265px;letter-spacing:0.3px;">9999</div>
<div class="cell dt" style="left:329px;top:264px;letter-spacing:1.3px;">----</div>
<div class="cell dt" style="left:397px;top:264px;letter-spacing:1.3px;">----</div>
<div class="cell dt" style="left:465px;top:265px;">Dental Expense</div>
<div class="cell dt num" style="left:683px;width:102px;top:265px;color:#0000F0;">2,918</div>
<div class="cell dt num" style="left:786px;width:102px;top:265px;color:#0000F0;">0</div>
<div class="cell dt num" style="left:889px;width:112px;top:265px;color:#0000F0;">326</div>
<div class="cell dt num" style="left:1002px;width:112px;top:265px;color:#0000F0;">0</div>
<div class="cell dt num" style="left:1115px;width:112px;top:265px;color:#0000F0;">0</div>
<div class="cell dt num" style="left:1228px;width:112px;top:265px;color:#0000F0;">0</div>
<div class="cell dt num" style="left:1341px;width:112px;top:265px;color:#0000F0;">0</div>
<div class="abs" style="left:0;top:300px;width:1497px;height:1px;background-image:linear-gradient(90deg,#D8D8D8 50%,transparent 50%);background-size:2px 1px;"></div>
<div class="cell" style="left:2px;width:52px;text-align:center;top:285px;font-weight:bold;font-size:11px;color:#2a2a2a;">15</div>
<div class="cell dt" style="left:57px;top:285px;letter-spacing:0.3px;">10100</div>
<div class="cell dt" style="left:125px;top:285px;letter-spacing:0.3px;">1010</div>
<div class="cell dt" style="left:193px;top:285px;letter-spacing:0.3px;">6203</div>
<div class="cell dt" style="left:261px;top:285px;letter-spacing:0.3px;">9999</div>
<div class="cell dt" style="left:329px;top:284px;letter-spacing:1.3px;">----</div>
<div class="cell dt" style="left:397px;top:284px;letter-spacing:1.3px;">----</div>
<div class="cell dt" style="left:465px;top:285px;">Extended Health</div>
<div class="cell dt num" style="left:683px;width:102px;top:285px;color:#0000F0;">1,797</div>
<div class="cell dt num" style="left:786px;width:102px;top:285px;color:#0000F0;">0</div>
<div class="cell dt num" style="left:889px;width:112px;top:285px;color:#0000F0;">181</div>
<div class="cell dt num" style="left:1002px;width:112px;top:285px;color:#0000F0;">0</div>
<div class="cell dt num" style="left:1115px;width:112px;top:285px;color:#0000F0;">0</div>
<div class="cell dt num" style="left:1228px;width:112px;top:285px;color:#0000F0;">0</div>
<div class="cell dt num" style="left:1341px;width:112px;top:285px;color:#0000F0;">0</div>
<div class="abs" style="left:0;top:320px;width:1497px;height:1px;background-image:linear-gradient(90deg,#D8D8D8 50%,transparent 50%);background-size:2px 1px;"></div>
<div class="cell" style="left:2px;width:52px;text-align:center;top:305px;font-weight:bold;font-size:11px;color:#2a2a2a;">16</div>
<div class="cell dt" style="left:57px;top:305px;letter-spacing:0.3px;">10100</div>
<div class="cell dt" style="left:125px;top:305px;letter-spacing:0.3px;">1010</div>
<div class="cell dt" style="left:193px;top:305px;letter-spacing:0.3px;">6204</div>
<div class="cell dt" style="left:261px;top:305px;letter-spacing:0.3px;">9999</div>
<div class="cell dt" style="left:329px;top:304px;letter-spacing:1.3px;">----</div>
<div class="cell dt" style="left:397px;top:304px;letter-spacing:1.3px;">----</div>
<div class="cell dt" style="left:465px;top:305px;">Vision</div>
<div class="cell dt num" style="left:683px;width:102px;top:305px;color:#0000F0;">402</div>
<div class="cell dt num" style="left:786px;width:102px;top:305px;color:#0000F0;">0</div>
<div class="cell dt num" style="left:889px;width:112px;top:305px;color:#0000F0;">64</div>
<div class="cell dt num" style="left:1002px;width:112px;top:305px;color:#0000F0;">0</div>
<div class="cell dt num" style="left:1115px;width:112px;top:305px;color:#0000F0;">0</div>
<div class="cell dt num" style="left:1228px;width:112px;top:305px;color:#0000F0;">0</div>
<div class="cell dt num" style="left:1341px;width:112px;top:305px;color:#0000F0;">0</div>
<div class="abs" style="left:0;top:340px;width:1497px;height:1px;background-image:linear-gradient(90deg,#D8D8D8 50%,transparent 50%);background-size:2px 1px;"></div>
<div class="cell" style="left:2px;width:52px;text-align:center;top:325px;font-weight:bold;font-size:11px;color:#2a2a2a;">17</div>
<div class="cell dt" style="left:57px;top:325px;letter-spacing:0.3px;">10100</div>
<div class="cell dt" style="left:125px;top:325px;letter-spacing:0.3px;">1010</div>
<div class="cell dt" style="left:193px;top:325px;letter-spacing:0.3px;">6205</div>
<div class="cell dt" style="left:261px;top:325px;letter-spacing:0.3px;">9999</div>
<div class="cell dt" style="left:329px;top:324px;letter-spacing:1.3px;">----</div>
<div class="cell dt" style="left:397px;top:324px;letter-spacing:1.3px;">----</div>
<div class="cell dt" style="left:465px;top:325px;">A.D. &amp; D.</div>
<div class="cell dt num" style="left:683px;width:102px;top:325px;color:#0000F0;">43</div>
<div class="cell dt num" style="left:786px;width:102px;top:325px;color:#0000F0;">0</div>
<div class="cell dt num" style="left:889px;width:112px;top:325px;color:#0000F0;">7</div>
<div class="cell dt num" style="left:1002px;width:112px;top:325px;color:#0000F0;">0</div>
<div class="cell dt num" style="left:1115px;width:112px;top:325px;color:#0000F0;">0</div>
<div class="cell dt num" style="left:1228px;width:112px;top:325px;color:#0000F0;">0</div>
<div class="cell dt num" style="left:1341px;width:112px;top:325px;color:#0000F0;">0</div>
<div class="abs" style="left:0;top:360px;width:1497px;height:1px;background-image:linear-gradient(90deg,#D8D8D8 50%,transparent 50%);background-size:2px 1px;"></div>
<div class="cell" style="left:2px;width:52px;text-align:center;top:345px;font-weight:bold;font-size:11px;color:#2a2a2a;">18</div>
<div class="cell dt" style="left:57px;top:345px;letter-spacing:0.3px;">10100</div>
<div class="cell dt" style="left:125px;top:345px;letter-spacing:0.3px;">1010</div>
<div class="cell dt" style="left:193px;top:345px;letter-spacing:0.3px;">6206</div>
<div class="cell dt" style="left:261px;top:345px;letter-spacing:0.3px;">9999</div>
<div class="cell dt" style="left:329px;top:344px;letter-spacing:1.3px;">----</div>
<div class="cell dt" style="left:397px;top:344px;letter-spacing:1.3px;">----</div>
<div class="cell dt" style="left:465px;top:345px;">Employee Assistance Program</div>
<div class="cell dt num" style="left:683px;width:102px;top:345px;color:#0000F0;">125</div>
<div class="cell dt num" style="left:786px;width:102px;top:345px;color:#0000F0;">0</div>
<div class="cell dt num" style="left:889px;width:112px;top:345px;color:#0000F0;">20</div>
<div class="cell dt num" style="left:1002px;width:112px;top:345px;color:#0000F0;">0</div>
<div class="cell dt num" style="left:1115px;width:112px;top:345px;color:#0000F0;">0</div>
<div class="cell dt num" style="left:1228px;width:112px;top:345px;color:#0000F0;">0</div>
<div class="cell dt num" style="left:1341px;width:112px;top:345px;color:#0000F0;">0</div>
<div class="abs" style="left:0;top:380px;width:1497px;height:1px;background-image:linear-gradient(90deg,#D8D8D8 50%,transparent 50%);background-size:2px 1px;"></div>
<div class="cell" style="left:2px;width:52px;text-align:center;top:365px;font-weight:bold;font-size:11px;color:#2a2a2a;">19</div>
<div class="cell dt" style="left:57px;top:365px;letter-spacing:0.3px;">10100</div>
<div class="cell dt" style="left:125px;top:365px;letter-spacing:0.3px;">1010</div>
<div class="cell dt" style="left:193px;top:365px;letter-spacing:0.3px;">6211</div>
<div class="cell dt" style="left:261px;top:365px;letter-spacing:0.3px;">9999</div>
<div class="cell dt" style="left:329px;top:364px;letter-spacing:1.3px;">----</div>
<div class="cell dt" style="left:397px;top:364px;letter-spacing:1.3px;">----</div>
<div class="cell dt" style="left:465px;top:365px;">E.I. Expense</div>
<div class="cell dt num" style="left:683px;width:102px;top:365px;color:#0000F0;">3,472</div>
<div class="cell dt num" style="left:786px;width:102px;top:365px;color:#0000F0;">0</div>
<div class="cell dt num" style="left:889px;width:112px;top:365px;color:#0000F0;">558</div>
<div class="cell dt num" style="left:1002px;width:112px;top:365px;color:#0000F0;">0</div>
<div class="cell dt num" style="left:1115px;width:112px;top:365px;color:#0000F0;">0</div>
<div class="cell dt num" style="left:1228px;width:112px;top:365px;color:#0000F0;">0</div>
<div class="cell dt num" style="left:1341px;width:112px;top:365px;color:#0000F0;">0</div>
<div class="abs" style="left:0;top:400px;width:1497px;height:1px;background-image:linear-gradient(90deg,#D8D8D8 50%,transparent 50%);background-size:2px 1px;"></div>
<div class="cell" style="left:2px;width:52px;text-align:center;top:385px;font-weight:bold;font-size:11px;color:#2a2a2a;">20</div>
<div class="cell dt" style="left:57px;top:385px;letter-spacing:0.3px;">10100</div>
<div class="cell dt" style="left:125px;top:385px;letter-spacing:0.3px;">1010</div>
<div class="cell dt" style="left:193px;top:385px;letter-spacing:0.3px;">6212</div>
<div class="cell dt" style="left:261px;top:385px;letter-spacing:0.3px;">9999</div>
<div class="cell dt" style="left:329px;top:384px;letter-spacing:1.3px;">----</div>
<div class="cell dt" style="left:397px;top:384px;letter-spacing:1.3px;">----</div>
<div class="cell dt" style="left:465px;top:385px;">W.C.B. Expense</div>
<div class="cell dt num" style="left:683px;width:102px;top:385px;color:#0000F0;">249</div>
<div class="cell dt num" style="left:786px;width:102px;top:385px;color:#0000F0;">0</div>
<div class="cell dt num" style="left:889px;width:112px;top:385px;color:#0000F0;">40</div>
<div class="cell dt num" style="left:1002px;width:112px;top:385px;color:#0000F0;">0</div>
<div class="cell dt num" style="left:1115px;width:112px;top:385px;color:#0000F0;">0</div>
<div class="cell dt num" style="left:1228px;width:112px;top:385px;color:#0000F0;">0</div>
<div class="cell dt num" style="left:1341px;width:112px;top:385px;color:#0000F0;">0</div>
<div class="abs" style="left:0;top:420px;width:1497px;height:1px;background-image:linear-gradient(90deg,#D8D8D8 50%,transparent 50%);background-size:2px 1px;"></div>
<div class="cell" style="left:2px;width:52px;text-align:center;top:405px;font-weight:bold;font-size:11px;color:#2a2a2a;">21</div>
<div class="cell dt" style="left:57px;top:405px;letter-spacing:0.3px;">10100</div>
<div class="cell dt" style="left:125px;top:405px;letter-spacing:0.3px;">1010</div>
<div class="cell dt" style="left:193px;top:405px;letter-spacing:0.3px;">6213</div>
<div class="cell dt" style="left:261px;top:405px;letter-spacing:0.3px;">9999</div>
<div class="cell dt" style="left:329px;top:404px;letter-spacing:1.3px;">----</div>
<div class="cell dt" style="left:397px;top:404px;letter-spacing:1.3px;">----</div>
<div class="cell dt" style="left:465px;top:405px;">C.P.P. Expense</div>
<div class="cell dt num" style="left:683px;width:102px;top:405px;color:#0000F0;">4,508</div>
<div class="cell dt num" style="left:786px;width:102px;top:405px;color:#0000F0;">0</div>
<div class="cell dt num" style="left:889px;width:112px;top:405px;color:#0000F0;">120</div>
<div class="cell dt num" style="left:1002px;width:112px;top:405px;color:#0000F0;">0</div>
<div class="cell dt num" style="left:1115px;width:112px;top:405px;color:#0000F0;">0</div>
<div class="cell dt num" style="left:1228px;width:112px;top:405px;color:#0000F0;">0</div>
<div class="cell dt num" style="left:1341px;width:112px;top:405px;color:#0000F0;">0</div>
<div class="abs" style="left:52px;top:0;width:1px;height:420px;background-image:linear-gradient(#DCDCDC 50%,transparent 50%);background-size:1px 2px;"></div>
<div class="abs" style="left:120px;top:0;width:1px;height:420px;background-image:linear-gradient(#DCDCDC 50%,transparent 50%);background-size:1px 2px;"></div>
<div class="abs" style="left:188px;top:0;width:1px;height:420px;background-image:linear-gradient(#DCDCDC 50%,transparent 50%);background-size:1px 2px;"></div>
<div class="abs" style="left:256px;top:0;width:1px;height:420px;background-image:linear-gradient(#DCDCDC 50%,transparent 50%);background-size:1px 2px;"></div>
<div class="abs" style="left:324px;top:0;width:1px;height:420px;background-image:linear-gradient(#DCDCDC 50%,transparent 50%);background-size:1px 2px;"></div>
<div class="abs" style="left:392px;top:0;width:1px;height:420px;background-image:linear-gradient(#DCDCDC 50%,transparent 50%);background-size:1px 2px;"></div>
<div class="abs" style="left:460px;top:0;width:1px;height:420px;background-image:linear-gradient(#DCDCDC 50%,transparent 50%);background-size:1px 2px;"></div>
<div class="abs" style="left:683px;top:0;width:1px;height:420px;background-image:linear-gradient(#DCDCDC 50%,transparent 50%);background-size:1px 2px;"></div>
<div class="abs" style="left:786px;top:0;width:1px;height:420px;background-image:linear-gradient(#DCDCDC 50%,transparent 50%);background-size:1px 2px;"></div>
<div class="abs" style="left:889px;top:0;width:1px;height:420px;background-image:linear-gradient(#DCDCDC 50%,transparent 50%);background-size:1px 2px;"></div>
<div class="abs" style="left:1002px;top:0;width:1px;height:420px;background-image:linear-gradient(#DCDCDC 50%,transparent 50%);background-size:1px 2px;"></div>
<div class="abs" style="left:1115px;top:0;width:1px;height:420px;background-image:linear-gradient(#DCDCDC 50%,transparent 50%);background-size:1px 2px;"></div>
<div class="abs" style="left:1228px;top:0;width:1px;height:420px;background-image:linear-gradient(#DCDCDC 50%,transparent 50%);background-size:1px 2px;"></div>
<div class="abs" style="left:1341px;top:0;width:1px;height:420px;background-image:linear-gradient(#DCDCDC 50%,transparent 50%);background-size:1px 2px;"></div>
<div class="abs" style="left:1454px;top:0;width:1px;height:420px;background-image:linear-gradient(#DCDCDC 50%,transparent 50%);background-size:1px 2px;"></div>
</div>
<div class="abs" style="left:0;top:619px;width:1497px;height:1px;background:#D8E4E4;"></div>
<div class="abs" style="left:0;top:620px;width:1497px;height:5px;background:#F6EEEE;"></div>
<div class="abs" style="left:0;top:625px;width:1497px;height:7px;background:#E6EEEC;"></div>
<div class="abs" style="left:0;top:632px;width:1497px;height:15px;background:#D5DCF5;"></div>
<div class="abs" style="left:0;top:647px;width:1497px;height:1px;background:#A9ADA6;"></div>
<div class="abs" style="left:52px;top:619px;width:1px;height:28px;background:#A9ADA6;"></div>
<div class="abs" style="left:120px;top:619px;width:1px;height:28px;background:#A9ADA6;"></div>
<div class="abs" style="left:188px;top:619px;width:1px;height:28px;background:#A9ADA6;"></div>
<div class="abs" style="left:256px;top:619px;width:1px;height:28px;background:#A9ADA6;"></div>
<div class="abs" style="left:324px;top:619px;width:1px;height:28px;background:#A9ADA6;"></div>
<div class="abs" style="left:392px;top:619px;width:1px;height:28px;background:#A9ADA6;"></div>
<div class="abs" style="left:460px;top:619px;width:1px;height:28px;background:#A9ADA6;"></div>
<div class="abs" style="left:683px;top:619px;width:1px;height:28px;background:#A9ADA6;"></div>
<div class="abs" style="left:786px;top:619px;width:1px;height:28px;background:#A9ADA6;"></div>
<div class="abs" style="left:889px;top:619px;width:1px;height:28px;background:#A9ADA6;"></div>
<div class="abs" style="left:1002px;top:619px;width:1px;height:28px;background:#A9ADA6;"></div>
<div class="abs" style="left:1115px;top:619px;width:1px;height:28px;background:#A9ADA6;"></div>
<div class="abs" style="left:1228px;top:619px;width:1px;height:28px;background:#A9ADA6;"></div>
<div class="abs" style="left:1341px;top:619px;width:1px;height:28px;background:#A9ADA6;"></div>
<div class="abs" style="left:1454px;top:619px;width:1px;height:28px;background:#A9ADA6;"></div>
<div class="hdr" style="left:8px;top:622px;font-size:12px;">Records</div>
<div class="hdr" style="left:0;width:53px;text-align:center;top:634px;font-size:12px;">65</div>
<div class="hdr" style="left:465px;top:628px;">Total</div>
<div class="hdr" style="left:683px;width:101px;text-align:right;top:628px;font-size:12.3px;">278,735</div>
<div class="hdr" style="left:786px;width:101px;text-align:right;top:628px;font-size:12.3px;">0</div>
<div class="hdr" style="left:889px;width:111px;text-align:right;top:628px;font-size:12.3px;">40,891</div>
<div class="hdr" style="left:1002px;width:111px;text-align:right;top:628px;font-size:12.3px;">150</div>
<div class="hdr" style="left:1115px;width:111px;text-align:right;top:628px;font-size:12.3px;">232,153</div>
<div class="hdr" style="left:1228px;width:111px;text-align:right;top:628px;font-size:12.3px;">256</div>
<div class="hdr" style="left:1341px;width:111px;text-align:right;top:628px;font-size:12.3px;">1</div>
<div class="abs" style="left:0;top:651px;width:1497px;height:16px;background:#E6E5DE;"></div>
<div class="abs" style="left:15px;top:651px;width:970px;height:16px;background:#BDBCB4;"></div>
<svg class="abs" style="left:4px;top:655px" width="6" height="9"><path d="M5 0.5 L1 4.5 L5 8.5" fill="none" stroke="#8A8AA0" stroke-width="1.2"/></svg>
<svg class="abs" style="left:1486px;top:655px" width="6" height="9"><path d="M1 0.5 L5 4.5 L1 8.5" fill="none" stroke="#8A8AA0" stroke-width="1.2"/></svg>
<div class="abs" style="left:0;top:668px;width:1497px;height:1px;background:#D0D6D6;"></div>
<div class="abs" style="left:0;top:669px;width:1497px;height:26px;background:#F6EEEE;"></div>
<div class="abs" style="left:149px;top:669px;width:1px;height:26px;background:#D4D8D8;"></div>
<div class="abs" style="left:1229px;top:669px;width:1px;height:26px;background:#D4D8D8;"></div>
<div class="abs" style="left:1311px;top:669px;width:1px;height:26px;background:#D4D8D8;"></div>
<div class="abs" style="left:1413px;top:669px;width:1px;height:26px;background:#D4D8D8;"></div>
<div class="abs" style="left:1455px;top:669px;width:1px;height:26px;background:#D4D8D8;"></div>
<svg class="abs" style="left:20px;top:676px" width="15" height="13" viewBox="0 0 15 13"><rect x="0.5" y="0.5" width="14" height="12" fill="#E8EEF8" stroke="#46557A"/><rect x="12" y="1" width="2" height="11" fill="#4A7AD8"/><path d="M3 6.5 L7 3 V5 H10 V8 H7 V10Z" fill="#3A6AD0"/></svg>
<div class="cell" style="left:43px;top:676px;color:#333;">Return To Menu</div>
<svg class="abs" style="left:1244px;top:673px" width="18" height="16" viewBox="0 0 18 16"><path d="M0.5 0.5H7.5L11.5 4.5V15.5H0.5Z" fill="#DDEBF8" stroke="#5A7AA8"/><path d="M1.5 1.5H5V14.5H1.5Z" fill="#F4F8FC"/><path d="M4 13 L13.5 3" stroke="#E8C020" stroke-width="2.6"/><path d="M13 2.5 L15 1" stroke="#333" stroke-width="2.2"/><path d="M3.2 14.2 L4.4 12.6" stroke="#555" stroke-width="1.2"/></svg>
<div class="cell" style="left:1266px;top:676px;color:#333;">Notes</div>
<svg class="abs" style="left:1325px;top:673px" width="14" height="17" viewBox="0 0 14 17"><path d="M7 8 L12 15" stroke="#444" stroke-width="1.8"/><circle cx="5.5" cy="5.5" r="4.8" fill="#E03A10"/><circle cx="4" cy="3.8" r="1.4" fill="#F8B090"/></svg>
<div class="cell" style="left:1346px;top:676px;color:#333;">Save As...</div>
<svg class="abs" style="left:1426px;top:673px" width="18" height="17" viewBox="0 0 18 17"><path d="M4.5 0.5H13L16.5 4V16H4.5Z" fill="#ECEEEE" stroke="#A8A8A8"/><path d="M13 0.5V4H16.5" fill="#fff" stroke="#A8A8A8"/><path d="M4.5 16H16.5" stroke="#222" stroke-width="1.2"/><rect x="1" y="2" width="10.5" height="4" fill="#E80010"/><path d="M6 14 L10 7.5 L11 11 L15 12.5 M10 7.5 L9.5 10.5 L15 12.5" fill="none" stroke="#E81020" stroke-width="0.9"/></svg>
<svg class="abs" style="left:1469px;top:673px" width="17" height="17" viewBox="0 0 17 17"><path d="M3.5 0.5H13L15.5 3V16H3.5Z" fill="#C8DAF4" stroke="#4A6A8A"/><path d="M10 5H14M10 8H14M6 12H14" stroke="#8AAAD8"/><rect x="0.5" y="1.5" width="9.5" height="9.5" fill="#fff" stroke="#2A7A2A" stroke-width="1.2"/><path d="M2.5 3.5 L8 9 M8 3.5 L2.5 9" stroke="#2E8A2E" stroke-width="2.2"/></svg>
</div>
<svg class="callout" width="1512" height="779" viewBox="0 0 1512 779" style="position:absolute;left:0;top:0;">
<defs><filter id="sh" x="-20%" y="-20%" width="150%" height="150%"><feMorphology in="SourceAlpha" operator="dilate" radius="1"/><feGaussianBlur stdDeviation="2.2"/><feOffset dx="0.5" dy="3.5" result="b"/><feFlood flood-color="#505050" flood-opacity="0.65"/><feComposite in2="b" operator="in"/><feMerge><feMergeNode/><feMergeNode in="SourceGraphic"/></feMerge></filter></defs>
<g filter="url(#sh)">
<rect x="308" y="8" width="196.5" height="95.0" rx="47.5" ry="47.5" fill="#fff" stroke="#fff" stroke-width="7"/>
<path d="M327.8,47.8 L232,144 L352.0,82.8Z" fill="#fff" stroke="#fff" stroke-width="7" stroke-linejoin="miter" stroke-miterlimit="30"/>
</g>
<rect x="308" y="8" width="196.5" height="95.0" rx="47.5" ry="47.5" fill="#3D55EB"/>
<path d="M327.8,47.8 L232,144 L352.0,82.8Z" fill="#3D55EB"/>
<text x="405.6" y="51.3" font-family="Liberation Sans" font-size="15.6" fill="#fff" text-anchor="middle">Fiscal Period</text>
<text x="405.6" y="68.8" font-family="Liberation Sans" font-size="15.6" fill="#fff" text-anchor="middle">Selected</text>
<g filter="url(#sh)">
<rect x="1160" y="208" width="144.0" height="82.0" rx="41.0" ry="41.0" fill="#fff" stroke="#fff" stroke-width="7"/>
<path d="M1266.4,223.1 L1358,172.6 L1288.8,250.1Z" fill="#fff" stroke="#fff" stroke-width="7" stroke-linejoin="miter" stroke-miterlimit="30"/>
</g>
<rect x="1160" y="208" width="144.0" height="82.0" rx="41.0" ry="41.0" fill="#3D55EB"/>
<path d="M1266.4,223.1 L1358,172.6 L1288.8,250.1Z" fill="#3D55EB"/>
<text x="1230.7" y="236.2" font-family="Liberation Sans" font-size="15.6" fill="#fff" text-anchor="middle">Display or</text>
<text x="1230.7" y="254.4" font-family="Liberation Sans" font-size="15.6" fill="#fff" text-anchor="middle">hide decimals</text>
<text x="1230.7" y="272.5" font-family="Liberation Sans" font-size="15.6" fill="#fff" text-anchor="middle">(rounding)</text>
<g filter="url(#sh)">
<rect x="482" y="489.5" width="182.0" height="104.9" rx="52.4" ry="52.4" fill="#fff" stroke="#fff" stroke-width="7"/>
<path d="M613.9,509.6 L734.6,441.5 L646.4,544.2Z" fill="#fff" stroke="#fff" stroke-width="7" stroke-linejoin="miter" stroke-miterlimit="30"/>
</g>
<rect x="482" y="489.5" width="182.0" height="104.9" rx="52.4" ry="52.4" fill="#3D55EB"/>
<path d="M613.9,509.6 L734.6,441.5 L646.4,544.2Z" fill="#3D55EB"/>
<text x="572" y="538.5" font-family="Liberation Sans" font-size="15.6" fill="#fff" text-anchor="middle">Drill-down to the</text>
<text x="572" y="556.3" font-family="Liberation Sans" font-size="15.6" fill="#fff" text-anchor="middle">transaction detail</text>
<g filter="url(#sh)">
<rect x="132" y="551" width="196.5" height="97.6" rx="48.8" ry="48.8" fill="#fff" stroke="#fff" stroke-width="7"/>
<path d="M152.6,593.8 L54.7,694.8 L178.8,628.4Z" fill="#fff" stroke="#fff" stroke-width="7" stroke-linejoin="miter" stroke-miterlimit="30"/>
</g>
<rect x="132" y="551" width="196.5" height="97.6" rx="48.8" ry="48.8" fill="#3D55EB"/>
<path d="M152.6,593.8 L54.7,694.8 L178.8,628.4Z" fill="#3D55EB"/>
<text x="229.8" y="587.4" font-family="Liberation Sans" font-size="15.6" fill="#fff" text-anchor="middle">Total number of</text>
<text x="229.8" y="605.4" font-family="Liberation Sans" font-size="15.6" fill="#fff" text-anchor="middle">rows (records)</text>
<text x="229.8" y="623.2" font-family="Liberation Sans" font-size="15.6" fill="#fff" text-anchor="middle">generated</text>
<g filter="url(#sh)">
<rect x="730.3" y="571.6" width="195.7" height="96.4" rx="48.2" ry="48.2" fill="#fff" stroke="#fff" stroke-width="7"/>
<path d="M905.7,614.7 L1002.3,711.3 L880.7,649.3Z" fill="#fff" stroke="#fff" stroke-width="7" stroke-linejoin="miter" stroke-miterlimit="30"/>
</g>
<rect x="730.3" y="571.6" width="195.7" height="96.4" rx="48.2" ry="48.2" fill="#3D55EB"/>
<path d="M905.7,614.7 L1002.3,711.3 L880.7,649.3Z" fill="#3D55EB"/>
<text x="826.7" y="616.2" font-family="Liberation Sans" font-size="15.6" fill="#fff" text-anchor="middle">Use Scroll Bar as</text>
<text x="826.7" y="634.7" font-family="Liberation Sans" font-size="15.6" fill="#fff" text-anchor="middle">needed</text>
<g filter="url(#sh)">
<rect x="1063" y="582" width="187.0" height="99.0" rx="49.5" ry="49.5" fill="#fff" stroke="#fff" stroke-width="7"/>
<path d="M1230.8,626.5 L1322,724 L1204.5,662.8Z" fill="#fff" stroke="#fff" stroke-width="7" stroke-linejoin="miter" stroke-miterlimit="30"/>
</g>
<rect x="1063" y="582" width="187.0" height="99.0" rx="49.5" ry="49.5" fill="#3D55EB"/>
<path d="M1230.8,626.5 L1322,724 L1204.5,662.8Z" fill="#3D55EB"/>
<text x="1155.5" y="628.5" font-family="Liberation Sans" font-size="15.6" fill="#fff" text-anchor="middle">Save as a Pinned</text>
<text x="1155.5" y="646.3" font-family="Liberation Sans" font-size="15.6" fill="#fff" text-anchor="middle">Report</text>
</svg>
</body></html>
